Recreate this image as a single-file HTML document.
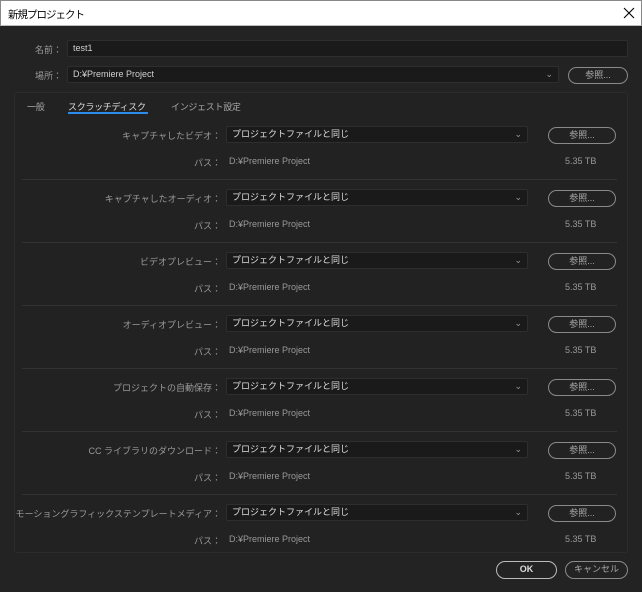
<!DOCTYPE html>
<html><head><meta charset="utf-8"><style>
*{box-sizing:border-box;margin:0;padding:0}
body{width:642px;height:592px;background:#232323;font-family:"Liberation Sans","Noto Sans CJK JP",sans-serif;font-size:9px;color:#c8c8c8;position:relative;overflow:hidden}
.a{position:absolute;white-space:nowrap}
.title{left:0;top:0;width:642px;height:26px;background:#fff;color:#000;border:1px solid #888;border-bottom:1px solid #bbb}
.inp{background:#1a1a1a;border:1px solid #2e2e2e;border-radius:2px;color:#d0d0d0;padding-left:5px;line-height:15px}
.btn{border:1.5px solid #8a8a8a;border-radius:9px;text-align:center;color:#aaa;line-height:14px}
.lbl{color:#9a9a9a;text-align:right}
.chev{position:absolute;right:5px;top:0;color:#999;font-size:9px}
.sep{position:absolute;left:22px;width:595px;height:1px;background:#333}
.tab{font-size:9px;letter-spacing:-0.3px}
</style></head><body>
<div class="a title"><span class="a" style="left:7px;top:6px;font-size:10.5px;letter-spacing:-1px">新規プロジェクト</span>
<svg class="a" style="left:622px;top:6px" width="12" height="12" viewBox="0 0 12 12"><path d="M1 1L11 11M11 1L1 11" stroke="#000" stroke-width="1.1"/></svg></div>
<div class="a lbl" style="left:20px;top:43px;width:42px">名前：</div>
<div class="a inp" style="left:67px;top:40px;width:561px;height:17px">test1</div>
<div class="a lbl" style="left:20px;top:69px;width:42px">場所：</div>
<div class="a inp" style="left:67px;top:66px;width:492px;height:17px">D:¥Premiere Project<span class="chev">⌄</span></div>
<div class="a btn" style="left:568px;top:67px;width:60px;height:17px">参照...</div>
<div class="a" style="left:14px;top:92px;width:614px;height:461px;border:1px solid #2c2c2c;border-radius:3px;background:#222"></div>
<div class="a tab" style="left:27px;top:100px;color:#aaa">一般</div>
<div class="a tab" style="left:68px;top:100px;color:#ddd">スクラッチディスク</div>
<div class="a" style="left:68px;top:112px;width:80px;height:2px;background:#2d8ceb"></div>
<div class="a tab" style="left:171px;top:100px;color:#aaa">インジェスト設定</div>
<div id="rows"></div>
<div class="a btn" style="left:496px;top:561px;width:61px;height:18px;color:#ddd;font-weight:bold;border-color:#bbb;line-height:15px">OK</div>
<div class="a btn" style="left:565px;top:561px;width:63px;height:18px;line-height:15px">キャンセル</div>
<script>
var L=["キャプチャしたビデオ：","キャプチャしたオーディオ：","ビデオプレビュー：","オーディオプレビュー：","プロジェクトの自動保存：","CC ライブラリのダウンロード：","モーショングラフィックステンプレートメディア："];
var h="";
for(var i=0;i<7;i++){var y=126+i*63;
h+='<div class="a lbl" style="left:14px;top:'+(y+3)+'px;width:207px">'+L[i]+'</div>';
h+='<div class="a inp" style="left:226px;top:'+y+'px;width:302px;height:17px;color:#ddd">プロジェクトファイルと同じ<span class="chev">⌄</span></div>';
h+='<div class="a btn" style="left:548px;top:'+(y+1)+'px;width:68px;height:17px">参照...</div>';
h+='<div class="a lbl" style="left:150px;top:'+(y+30)+'px;width:71px">パス：</div>';
h+='<div class="a" style="left:229px;top:'+(y+30)+'px;color:#999">D:¥Premiere Project</div>';
h+='<div class="a" style="left:565px;top:'+(y+30)+'px;color:#999">5.35 TB</div>';
if(i<6)h+='<div class="sep" style="top:'+(y+53)+'px"></div>';}
document.getElementById("rows").innerHTML=h;
</script>
</body></html>
